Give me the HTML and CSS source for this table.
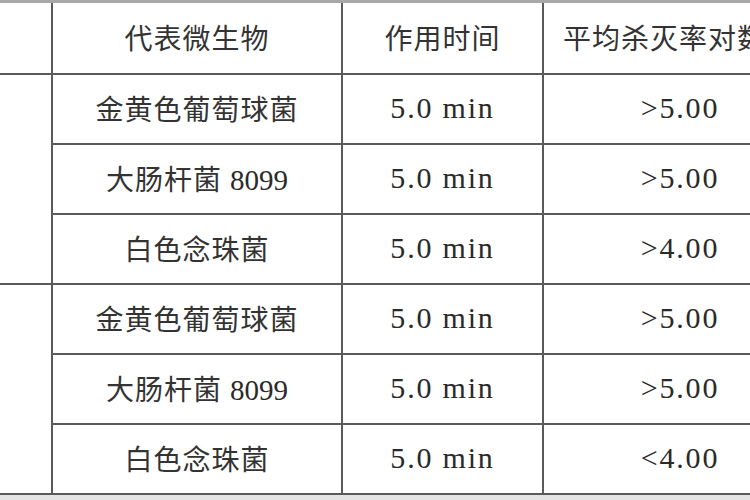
FILE: index.html
```html
<!DOCTYPE html>
<html lang="zh">
<head>
<meta charset="utf-8">
<link rel="stylesheet" href="styles.css">
</head>
<body>
<div class="frame">
  <div class="grid">
    <div class="cell"></div>
    <div class="cell">代表微生物</div>
    <div class="cell">作用时间</div>
    <div class="cell head4">平均杀灭率对数值</div>

    <div class="cell group"></div>
    <div class="cell">金黄色葡萄球菌</div>
    <div class="cell num">5.0 min</div>
    <div class="cell num">&gt;5.00</div>
    <div class="cell"><span class="mixed">大肠杆菌 <span class="num">8099</span></span></div>
    <div class="cell num">5.0 min</div>
    <div class="cell num">&gt;5.00</div>
    <div class="cell">白色念珠菌</div>
    <div class="cell num">5.0 min</div>
    <div class="cell num">&gt;4.00</div>

    <div class="cell group"></div>
    <div class="cell">金黄色葡萄球菌</div>
    <div class="cell num">5.0 min</div>
    <div class="cell num">&gt;5.00</div>
    <div class="cell"><span class="mixed">大肠杆菌 <span class="num">8099</span></span></div>
    <div class="cell num">5.0 min</div>
    <div class="cell num">&gt;5.00</div>
    <div class="cell">白色念珠菌</div>
    <div class="cell num">5.0 min</div>
    <div class="cell num">&lt;4.00</div>
  </div>
</div>
</body>
</html>
```

FILE: styles.css
```css
html, body {
  margin: 0;
  padding: 0;
  background: #e4e4e4;
}
.frame {
  width: 750px;
  height: 500px;
  overflow: hidden;
  background: #e4e4e4;
}
.grid {
  width: 816px;
  display: grid;
  grid-template-columns: 51px 288px 199px 272px;
  grid-template-rows: 70px repeat(6, 68px);
  column-gap: 2px;
  row-gap: 2px;
  background: #5a5a5a;
  border-top: 3px solid #a8a8a8;
  border-bottom: 2px solid #5a5a5a;
}
.cell {
  background: #fff;
  display: flex;
  align-items: center;
  justify-content: center;
  font-family: "Liberation Serif", "Noto Sans CJK SC", serif;
  font-size: 28px;
  letter-spacing: 1px;
  color: #333;
  white-space: nowrap;
  padding-bottom: 3px;
  box-sizing: border-box;
}
.head4 {
  justify-content: flex-start;
  padding-left: 19px;
}
.group {
  grid-row: span 3;
}
.num {
  font-size: 30px;
  letter-spacing: 1.8px;
  color: #2a2a2a;
}
.mixed {
  white-space: pre;
}
.mixed .num {
  font-size: 29px;
  letter-spacing: 0;
}
```
